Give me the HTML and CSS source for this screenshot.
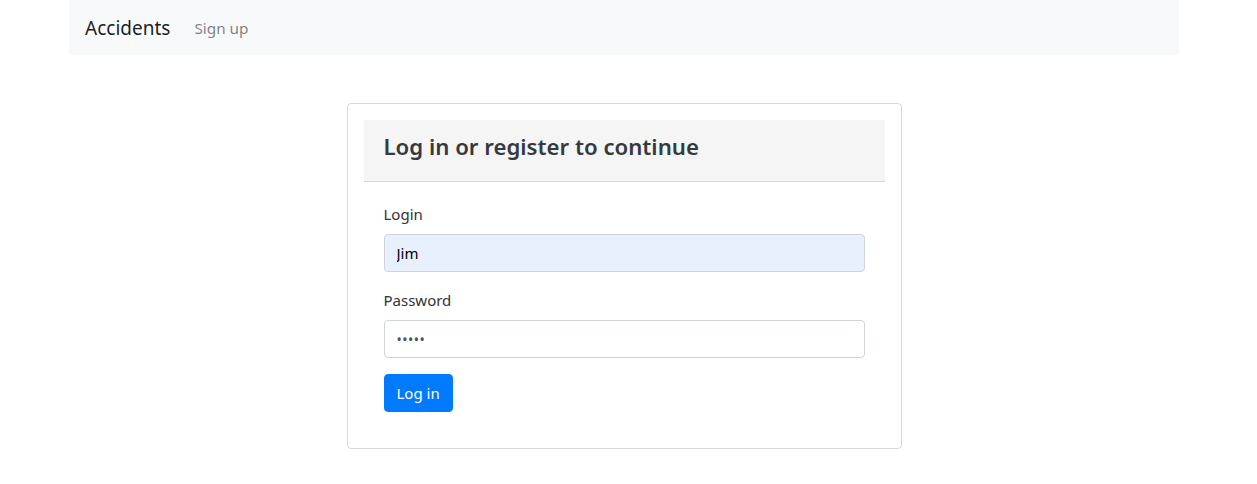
FILE: index.html
```html
<!DOCTYPE html>
<html lang="en">
<head>
<meta charset="utf-8">
<title>Accidents</title>
<link rel="stylesheet" href="styles.css">
</head>
<body>
<div class="container">
  <nav class="navbar">
    <a class="brand" href="#">Accidents</a>
    <a class="nav-link" href="#">Sign up</a>
  </nav>
  <div class="card">
    <div class="card-header">
      <h4 class="title">Log in or register to continue</h4>
    </div>
    <form class="card-body">
      <div class="form-group">
        <label class="label">Login</label>
        <input class="input autofill" type="text" value="Jim">
      </div>
      <div class="form-group">
        <label class="label">Password</label>
        <input class="input pw" type="password" value="12345">
      </div>
      <button class="btn" type="button">Log in</button>
    </form>
  </div>
</div>
</body>
</html>
```
FILE: styles.css
```css
* { box-sizing: border-box; }
html, body { margin: 0; padding: 0; background: #fff; }
body {
  font-family: "Noto Sans", "Open Sans", "DejaVu Sans", sans-serif;
  font-size: 16px;
  line-height: 1.5;
  color: #212529;
  padding-right: 9px;
}
.container {
  width: 1110px;
  margin: 0 auto;
}
.navbar {
  display: flex;
  align-items: center;
  background: #f8f9fa;
  padding: 10px 16px 8px;
  height: 55px;
}
.brand {
  font-size: 19px;
  color: rgba(0,0,0,.9);
  text-decoration: none;
  margin-right: 16px;
}
.nav-link {
  color: rgba(0,0,0,.5);
  text-decoration: none;
  padding: 0 8px;
  font-size: 15.3px;
}
.card {
  width: 555px;
  margin: 48px auto 0;
  border: 1px solid rgba(0,0,0,.15);
  border-radius: 4px;
  padding: 16px;
}
.card-header {
  background: #f5f5f5;
  border-bottom: 1px solid #d9d9d9;
  padding: 12px 20px 19px;
}
.title {
  margin: 0;
  font-size: 22.2px;
  font-weight: 600;
  line-height: 30px;
  color: #343a40;
}
.card-body {
  display: flex;
  flex-direction: column;
  align-items: flex-start;
  padding: 20px 20px 20px;
}
.form-group {
  width: 100%;
  margin-bottom: 16px;
}
.label {
  display: block;
  margin-bottom: 8px;
  font-size: 15px;
  line-height: 24px;
  color: #333;
}
.input {
  display: block;
  width: 100%;
  height: 38px;
  padding: 6px 12px;
  font: inherit;
  font-size: 15px;
  color: #000;
  background: #fff;
  border: 1px solid #ced4da;
  border-radius: 4px;
}
.input.pw { color: #495057; font-size: 14px; letter-spacing: 0.5px; }
.input.autofill { background: #e8f0fe; }
.btn {
  height: 38px;
  padding: 6px 12px;
  font: inherit;
  font-size: 15px;
  color: #fff;
  background: #007bff;
  border: 1px solid #007bff;
  border-radius: 4px;
}
```
